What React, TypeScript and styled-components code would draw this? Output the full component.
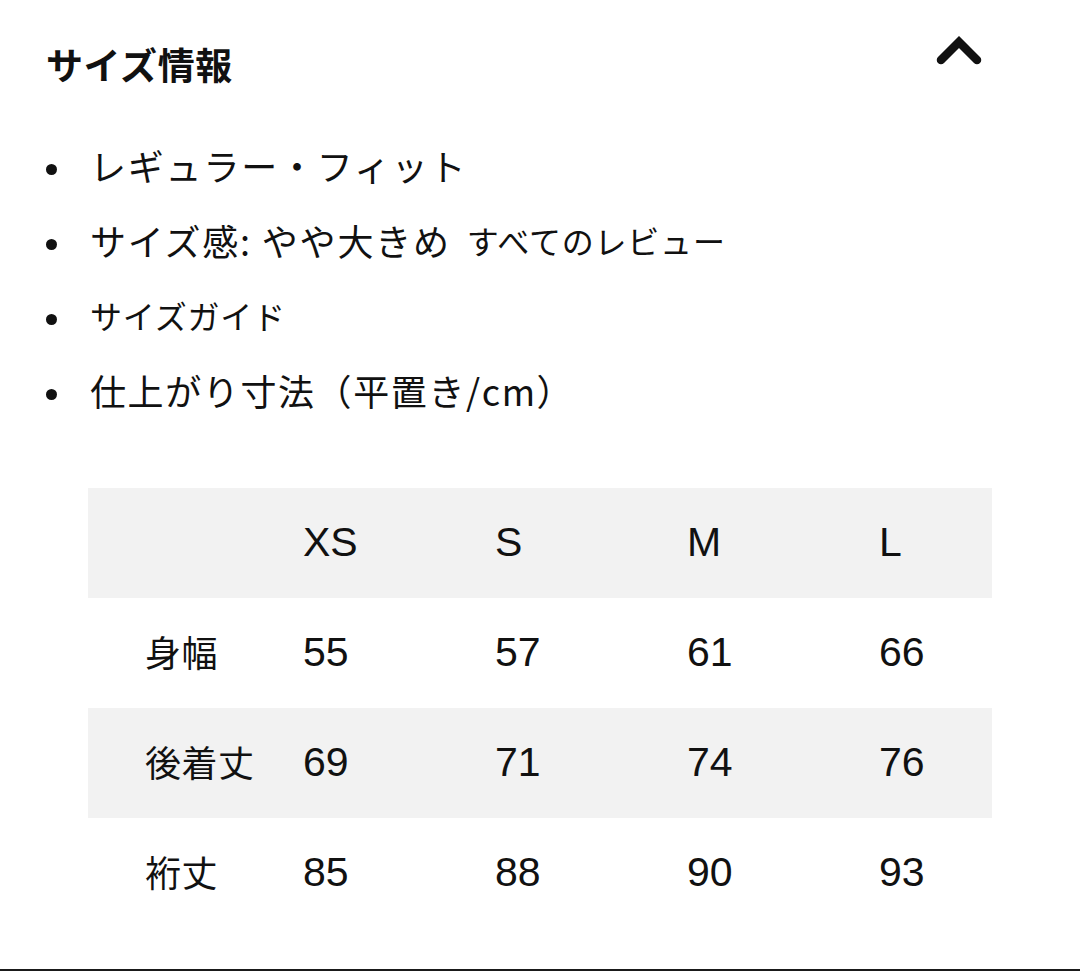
import React from "react";
import styled, { createGlobalStyle } from "styled-components";

const Global = createGlobalStyle`
  html, body { margin: 0; padding: 0; background: #fff; }
  body { font-family: "Noto Sans CJK JP", "Liberation Sans", sans-serif; color: #111; }
`;

const Page = styled.div`
  width: 1080px;
  box-sizing: border-box;
  padding-bottom: 41px;
  border-bottom: 2px solid #1a1a1a;
`;

const Header = styled.div`
  display: flex;
  justify-content: space-between;
  align-items: flex-start;
  height: 130px;
  padding: 28px 98px 0 46px;
  box-sizing: border-box;
`;

const Title = styled.h2`
  margin: 0;
  font-family: "Noto Sans CJK JP", sans-serif;
  font-weight: 700;
  font-size: 37px;
  line-height: 72px;
  letter-spacing: 0.6px;
`;

const Toggle = styled.button`
  border: 0;
  background: none;
  padding: 0;
  margin-top: 8px;
  width: 46px;
  height: 30px;
  display: flex;
  align-items: center;
  justify-content: center;
  cursor: pointer;
`;

const List = styled.ul`
  list-style: none;
  margin: 0;
  padding: 0 0 0 46px;
`;

const Item = styled.li<{ $size: number; $spacing: number }>`
  display: flex;
  align-items: center;
  height: 75px;
  box-sizing: border-box;
  padding-bottom: 6px;
  font-size: ${(p) => p.$size}px;
  letter-spacing: ${(p) => p.$spacing}px;
  line-height: 1;
  &::before {
    content: "";
    width: 11px;
    height: 11px;
    border-radius: 50%;
    background: #111;
    margin: 10px 33px 0 0;
    flex: none;
  }
`;

const Sub = styled.span`
  font-size: 32px;
  letter-spacing: 0.8px;
  margin-left: 16px;
`;

const TableWrap = styled.div`
  margin: 58px 88px 0 88px;
  width: 904px;
`;

const Row = styled.div<{ $shade: boolean }>`
  display: grid;
  grid-template-columns: 215px 192px 192px 192px 1fr;
  height: 110px;
  box-sizing: border-box;
  padding-bottom: 2px;
  align-items: center;
  background: ${(p) => (p.$shade ? "#f2f2f2" : "#fff")};
`;

const LabelCell = styled.div`
  padding: 0 0 2px 57px;
  font-family: "Noto Sans CJK JP", sans-serif;
  font-size: 36px;
  letter-spacing: 0.5px;
  line-height: 1;
`;

const Cell = styled.div`
  font-family: "Liberation Sans", Arial, sans-serif;
  font-size: 41px;
  line-height: 1;
`;

const sizes = ["XS", "S", "M", "L"];
const rows: [string, string[]][] = [
  ["身幅", ["55", "57", "61", "66"]],
  ["後着丈", ["69", "71", "74", "76"]],
  ["裄丈", ["85", "88", "90", "93"]],
];

export default function App() {
  return (
    <Page>
      <Global />
      <Header>
        <Title>サイズ情報</Title>
        <Toggle aria-label="閉じる">
          <svg width="46" height="30" viewBox="0 0 46 30">
            <path
              d="M5 24 L23 6 L41 24"
              fill="none"
              stroke="#111"
              strokeWidth="8.5"
              strokeLinecap="round"
              strokeLinejoin="miter"
            />
          </svg>
        </Toggle>
      </Header>
      <List>
        <Item $size={36} $spacing={1.8}>
          レギュラー・フィット
        </Item>
        <Item $size={36} $spacing={1.8}>
          サイズ感: やや大きめ<Sub>すべてのレビュー</Sub>
        </Item>
        <Item $size={32} $spacing={0.8}>
          サイズガイド
        </Item>
        <Item $size={36} $spacing={1.6}>
          仕上がり寸法（平置き/cm）
        </Item>
      </List>
      <TableWrap>
        <Row $shade>
          <LabelCell />
          {sizes.map((s) => (
            <Cell key={s}>{s}</Cell>
          ))}
        </Row>
        {rows.map(([label, vals], i) => (
          <Row key={label} $shade={i % 2 === 1}>
            <LabelCell>{label}</LabelCell>
            {vals.map((v, j) => (
              <Cell key={j}>{v}</Cell>
            ))}
          </Row>
        ))}
      </TableWrap>
    </Page>
  );
}
